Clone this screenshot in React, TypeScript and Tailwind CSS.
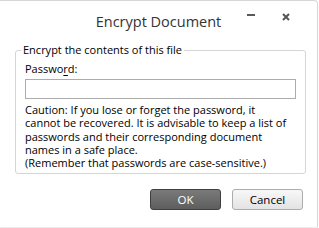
import React from 'react';

const font = { fontFamily: '"Open Sans", "Noto Sans", sans-serif' };

const App: React.FC = () => {
  return (
    <div className="w-[319px] h-[228px] bg-white overflow-hidden" style={font}>
      <div className="w-[318px] h-[227px] bg-white border-t border-r border-[#d6d6d6] rounded-tr-[4px] shadow-[0_1px_1px_rgba(0,0,0,0.08)] flex flex-col">
        {/* title bar */}
        <div className="relative h-[42px] flex items-start justify-center pt-[11px]">
          <span className="text-[14.5px] leading-[20px] text-[#333333]">Encrypt Document</span>
          <div className="absolute top-[13px] left-[247px] w-[8px] h-[2px] bg-[#5a5a5a]" />
          <svg className="absolute top-[12px] left-[282px]" width="8" height="8" viewBox="0 0 8 8">
            <path d="M1 1 L7 7 M7 1 L1 7" stroke="#555" strokeWidth="2" />
          </svg>
        </div>

        {/* group box */}
        <fieldset className="ml-[15px] w-[291px] min-w-0 border border-[#d5d5d5] rounded-[3px] px-[9px] pb-[4px] text-[11px] text-black">
          <legend className="-ml-[4px] px-[2px] leading-[14px]">Encrypt the contents of this file</legend>
          <label className="block mt-[5px] leading-[14px]">
            Passwo<span className="underline underline-offset-2">r</span>d:
          </label>
          <input
            type="password"
            className="block mt-[3px] w-full h-[20px] border border-[#acacac] bg-white outline-none px-1"
          />
          <p className="mt-[4px] leading-[13.25px] whitespace-nowrap">
            Caution: If you lose or forget the password, it
            <br />
            cannot be recovered. It is advisable to keep a list of
            <br />
            passwords and their corresponding document
            <br />
            names in a safe place.
            <br />
            (Remember that passwords are case-sensitive.)
          </p>
        </fieldset>

        {/* buttons */}
        <div className="flex justify-end gap-[11px] mt-[15px] pr-[14px] text-[11.5px]">
          <button className="w-[71px] h-[21px] rounded-[3px] border border-[#3f3f3f] bg-gradient-to-b from-[#7a7a7a] to-[#5e5e5e] text-white leading-none">
            OK
          </button>
          <button className="w-[71px] h-[21px] rounded-[3px] border border-[#acacac] bg-gradient-to-b from-[#f8f8f8] to-[#e3e3e3] text-black leading-none">
            Cancel
          </button>
        </div>
      </div>
    </div>
  );
};

export default App;
